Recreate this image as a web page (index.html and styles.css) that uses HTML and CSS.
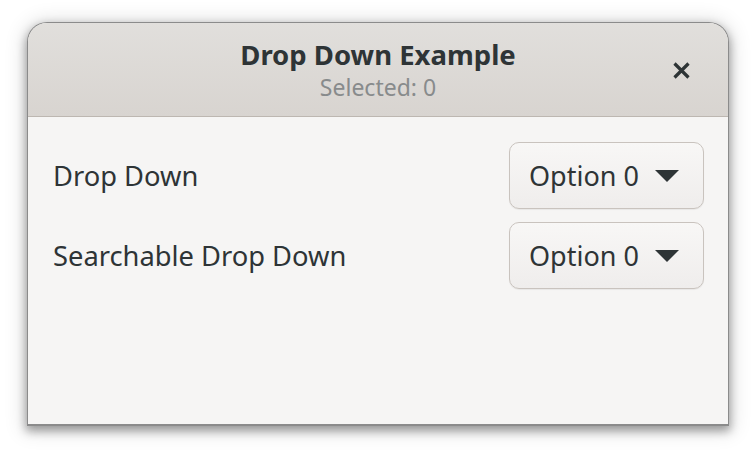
FILE: index.html
```html
<!DOCTYPE html>
<html>
<head>
<meta charset="utf-8">
<link rel="stylesheet" href="styles.css">
</head>
<body>
<div class="stage">
  <div class="window">
    <header class="headerbar">
      <div class="titles">
        <div class="title">Drop Down Example</div>
        <div class="subtitle">Selected: 0</div>
      </div>
      <button class="close" aria-label="Close">
        <svg width="17" height="17" viewBox="0 0 17 17"><path d="M1.5 1.5 L15.5 15.5 M15.5 1.5 L1.5 15.5" stroke="#2e3436" stroke-width="3.2" stroke-linecap="butt" fill="none"/></svg>
      </button>
    </header>
    <main class="content">
      <div class="row">
        <span class="label">Drop Down</span>
        <button class="dropdown"><span>Option 0</span><svg class="arrow" width="24" height="12" viewBox="0 0 24 12"><path d="M0 0 H24 L12 12 Z" fill="#2e3436"/></svg></button>
      </div>
      <div class="row">
        <span class="label">Searchable Drop Down</span>
        <button class="dropdown"><span>Option 0</span><svg class="arrow" width="24" height="12" viewBox="0 0 24 12"><path d="M0 0 H24 L12 12 Z" fill="#2e3436"/></svg></button>
      </div>
    </main>
  </div>
</div>
</body>
</html>
```

FILE: styles.css
```css
html, body {
  margin: 0;
  padding: 0;
  background: #ffffff;
}
body {
  font-family: "Noto Sans", "Open Sans", sans-serif;
  color: #2e3436;
}
.stage {
  padding: 22px 0 0 27px;
  height: 458px;
  box-sizing: border-box;
}
.window {
  width: 700px;
  height: 401px;
  border: 1px solid #8b8b8b;
  border-bottom-width: 2px;
  border-radius: 20px 20px 0 0;
  background: #f6f5f4;
  box-shadow: 0 4px 10px 1px rgba(0,0,0,0.35), 0 2px 20px 4px rgba(0,0,0,0.12);
  overflow: hidden;
  display: flex;
  flex-direction: column;
}
.headerbar {
  height: 94px;
  box-sizing: border-box;
  border-bottom: 1px solid #bdb7b1;
  background: linear-gradient(#e1dfdc, #d8d4d0);
  display: flex;
  align-items: center;
  justify-content: center;
  position: relative;
}
.titles {
  display: flex;
  flex-direction: column;
  align-items: center;
}
.title {
  font-size: 27.5px;
  font-weight: 700;
  line-height: 35px;
  color: #2e3436;
}
.subtitle {
  font-size: 23px;
  line-height: 30px;
  color: #888b8c;
}
.close {
  position: absolute;
  right: 38px;
  top: 39px;
  width: 17px;
  height: 17px;
  padding: 0;
  border: 0;
  background: none;
  display: flex;
}
.content {
  padding: 25px 24px 0 25px;
  display: flex;
  flex-direction: column;
  gap: 14px;
}
.row {
  display: flex;
  align-items: center;
  justify-content: space-between;
  height: 66px;
}
.label {
  font-size: 27.3px;
}
.dropdown {
  width: 195px;
  height: 67px;
  box-sizing: border-box;
  border: 1.5px solid #c9c3be;
  border-radius: 10px;
  background: linear-gradient(#f8f7f6, #efedec);
  box-shadow: 0 1px 1px rgba(0,0,0,0.06);
  display: flex;
  align-items: center;
  padding: 0 22px 0 19px;
  gap: 16px;
  font-family: inherit;
  font-size: 27px;
  color: #2e3436;
}
.arrow {
  margin-top: 2px;
}
```
